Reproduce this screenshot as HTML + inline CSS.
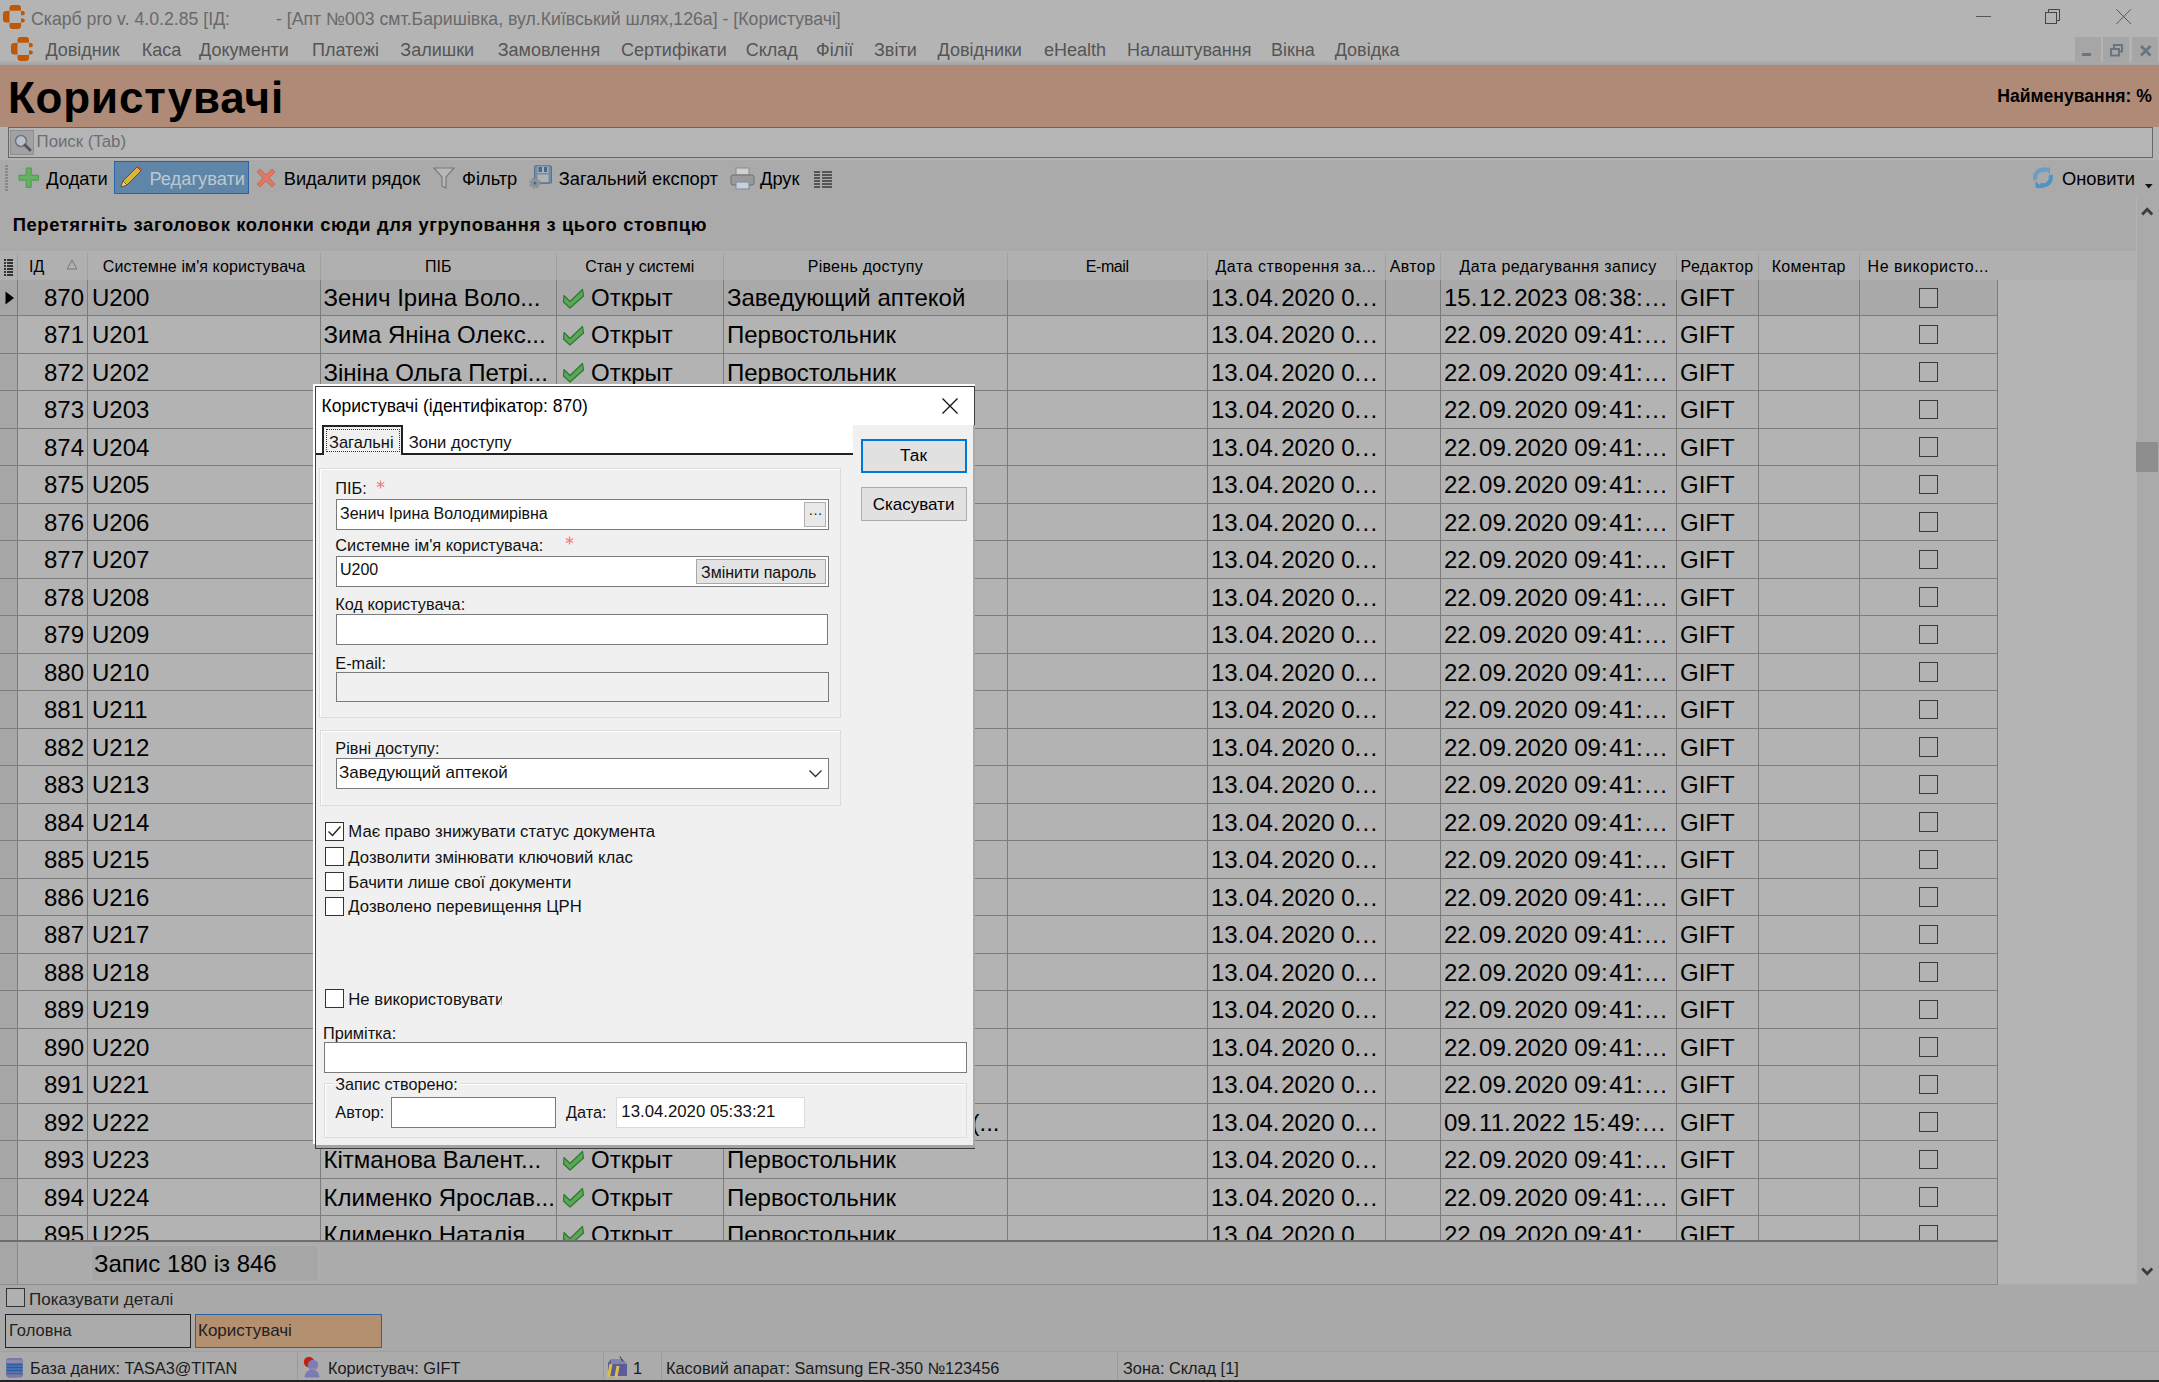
<!DOCTYPE html><html><head><meta charset="utf-8"><style>
*{box-sizing:border-box;margin:0;padding:0}
body{width:2159px;height:1382px;position:relative;overflow:hidden;background:#acacac;font-family:"Liberation Sans",sans-serif;color:#000}
.a{position:absolute}
.t{position:absolute;white-space:pre;line-height:1}
svg{position:absolute;overflow:visible}
</style></head><body>
<div class="a" style="left:0px;top:0px;width:2159px;height:33px;background:#b4b4b4"></div>
<svg style="left:3px;top:5px" width="23" height="25" viewBox="0 0 23 25"><g fill="#bc5808"><path d="M6.5 5.8V3a3 3 0 0 1 3-3h5.5a3 3 0 0 1 3 3v2.8z"/><path d="M6.5 6v11.4H3a3 3 0 0 1-3-3V9a3 3 0 0 1 3-3z"/><path d="M6.5 18h11.5v3a3 3 0 0 1-3 3H9.5a3 3 0 0 1-3-3z"/><path d="M18 6h1.8a2 2 0 0 1 2 2v0.3a2 2 0 0 1-2 2H18z"/><path d="M18 13.6h1.8a2 2 0 0 1 2 2v0a2 2 0 0 1-2 2H18z"/></g></svg>
<div class="t" style="left:31px;top:10.72px;font-size:17.7px;font-weight:400;color:#696969;">Скарб pro v. 4.0.2.85 [ІД:</div>
<div class="t" style="left:276px;top:10.72px;font-size:17.7px;font-weight:400;color:#696969;">- [Апт №003 смт.Баришівка, вул.Київський шлях,126а] - [Користувачі]</div>
<div class="a" style="left:1976px;top:16px;width:15px;height:1.2px;background:#555"></div>
<svg style="left:2044px;top:8px" width="18" height="18"><rect x="1.5" y="4.5" width="11" height="11" fill="none" stroke="#444" stroke-width="1"/><path d="M4.5 4.5v-3h11v11h-3" fill="none" stroke="#444" stroke-width="1"/></svg>
<svg style="left:2116px;top:9px" width="16" height="16"><path d="M0.3 0.3L15 15M15 0.3L0.3 15" stroke="#555" stroke-width="1"/></svg>
<div class="a" style="left:0px;top:33px;width:2159px;height:28px;background:#b4b4b4"></div>
<div class="a" style="left:0px;top:61px;width:2159px;height:4px;background:linear-gradient(#b0b0b0,#a4a4a4)"></div>
<svg style="left:11px;top:36.5px" width="23" height="25" viewBox="0 0 23 25"><g fill="#bc5808"><path d="M6.5 5.8V3a3 3 0 0 1 3-3h5.5a3 3 0 0 1 3 3v2.8z"/><path d="M6.5 6v11.4H3a3 3 0 0 1-3-3V9a3 3 0 0 1 3-3z"/><path d="M6.5 18h11.5v3a3 3 0 0 1-3 3H9.5a3 3 0 0 1-3-3z"/><path d="M18 6h1.8a2 2 0 0 1 2 2v0.3a2 2 0 0 1-2 2H18z"/><path d="M18 13.6h1.8a2 2 0 0 1 2 2v0a2 2 0 0 1-2 2H18z"/></g></svg>
<div class="t" style="left:45.4px;top:40.86px;font-size:18px;font-weight:400;color:#555;">Довідник</div>
<div class="t" style="left:141.7px;top:40.86px;font-size:18px;font-weight:400;color:#555;">Каса</div>
<div class="t" style="left:199px;top:40.86px;font-size:18px;font-weight:400;color:#555;">Документи</div>
<div class="t" style="left:312px;top:40.86px;font-size:18px;font-weight:400;color:#555;">Платежі</div>
<div class="t" style="left:400.3px;top:40.86px;font-size:18px;font-weight:400;color:#555;">Залишки</div>
<div class="t" style="left:497.7px;top:40.86px;font-size:18px;font-weight:400;color:#555;">Замовлення</div>
<div class="t" style="left:621px;top:40.86px;font-size:18px;font-weight:400;color:#555;">Сертифікати</div>
<div class="t" style="left:745.7px;top:40.86px;font-size:18px;font-weight:400;color:#555;">Склад</div>
<div class="t" style="left:816px;top:40.86px;font-size:18px;font-weight:400;color:#555;">Філії</div>
<div class="t" style="left:874px;top:40.86px;font-size:18px;font-weight:400;color:#555;">Звіти</div>
<div class="t" style="left:937.5px;top:40.86px;font-size:18px;font-weight:400;color:#555;">Довідники</div>
<div class="t" style="left:1044px;top:40.86px;font-size:18px;font-weight:400;color:#555;">eHealth</div>
<div class="t" style="left:1127px;top:40.86px;font-size:18px;font-weight:400;color:#555;">Налаштування</div>
<div class="t" style="left:1271px;top:40.86px;font-size:18px;font-weight:400;color:#555;">Вікна</div>
<div class="t" style="left:1334.7px;top:40.86px;font-size:18px;font-weight:400;color:#555;">Довідка</div>
<div class="a" style="left:2074.7px;top:37px;width:26.3px;height:26.2px;background:#a6a6a6"></div>
<div class="a" style="left:2103px;top:37px;width:26.3px;height:26.2px;background:#a6a6a6"></div>
<div class="a" style="left:2132px;top:37px;width:26.3px;height:26.2px;background:#a6a6a6"></div>
<div class="a" style="left:2082px;top:53.4px;width:9px;height:2.6px;background:#687684"></div>
<svg style="left:2110px;top:44px" width="14" height="13"><rect x="1" y="5" width="8" height="6.5" fill="none" stroke="#687684" stroke-width="2"/><path d="M4 4V1h8v6.5h-2.5" fill="none" stroke="#687684" stroke-width="2"/></svg>
<svg style="left:2140px;top:45px" width="12" height="12"><path d="M1 1L10.5 10.5M10.5 1L1 10.5" stroke="#687684" stroke-width="2.8"/></svg>
<div class="a" style="left:0px;top:65px;width:2159px;height:62px;background:#ae8a77"></div>
<div class="t" style="left:7.9px;top:75.75px;font-size:44px;font-weight:700;color:#000;letter-spacing:0.84px">Користувачі</div>
<div class="t" style="right:7px;top:87.80px;font-size:17.6px;font-weight:700;color:#000;">Найменування: %</div>
<div class="a" style="left:0px;top:127px;width:2159px;height:33px;background:#b3b3b3"></div>
<div class="a" style="left:8px;top:126.5px;width:2144.5px;height:31.7px;border:1.4px solid #666;background:#b5b5b5"></div>
<div class="a" style="left:10px;top:130px;width:24px;height:25px;background:#a2a2a2;border:1px solid #8e8e8e"></div>
<svg style="left:13px;top:133px" width="20" height="20"><circle cx="8" cy="8" r="5.5" fill="#b8c0cc" stroke="#6f7680" stroke-width="1.6"/><path d="M12 12l5 5" stroke="#555" stroke-width="3" stroke-linecap="round"/></svg>
<div class="t" style="left:36.6px;top:133.78px;font-size:16.8px;font-weight:400;color:#6a6e76;">Поиск (Tab)</div>
<div class="a" style="left:0px;top:160px;width:2159px;height:37px;background:#aaaaaa"></div>
<div class="a" style="left:5px;top:165px;width:3px;height:1.5px;background:#888"></div>
<div class="a" style="left:5px;top:168px;width:3px;height:1.5px;background:#888"></div>
<div class="a" style="left:5px;top:171px;width:3px;height:1.5px;background:#888"></div>
<div class="a" style="left:5px;top:174px;width:3px;height:1.5px;background:#888"></div>
<div class="a" style="left:5px;top:177px;width:3px;height:1.5px;background:#888"></div>
<div class="a" style="left:5px;top:180px;width:3px;height:1.5px;background:#888"></div>
<div class="a" style="left:5px;top:183px;width:3px;height:1.5px;background:#888"></div>
<div class="a" style="left:5px;top:186px;width:3px;height:1.5px;background:#888"></div>
<div class="a" style="left:5px;top:189px;width:3px;height:1.5px;background:#888"></div>
<svg style="left:18px;top:167px" width="22" height="22"><path d="M8.2 1h5v7.2h7.2v5h-7.2v7.2h-5v-7.2h-7.2v-5h7.2z" fill="#66b064" stroke="#4e9a4a" stroke-width="1"/></svg>
<div class="t" style="left:46.3px;top:169.81px;font-size:18.3px;font-weight:400;color:#000;">Додати</div>
<div class="a" style="left:114px;top:161px;width:135px;height:33px;background:#5f86a8;border:1px solid #2a62a2"></div>
<svg style="left:118px;top:164px" width="26" height="26"><path d="M3 23l2-6 14-14 4 4-14 14z" fill="#d8b43a" stroke="#6a5220" stroke-width="1"/><path d="M19 3l4 4 1.5-1.5-4-4z" fill="#c05050"/><path d="M3 23l2-6 4 4z" fill="#e8d0a0" stroke="#6a5220" stroke-width="0.8"/></svg>
<div class="t" style="left:149.4px;top:169.81px;font-size:18.3px;font-weight:400;color:#bdc8d0;">Редагувати</div>
<svg style="left:255px;top:167px" width="22" height="22"><path d="M2 5l3-3 6 6 6-6 3 3-6 6 6 6-3 3-6-6-6 6-3-3 6-6z" fill="#dc7a66" stroke="#c8604c" stroke-width="0.8"/></svg>
<div class="t" style="left:283.7px;top:169.81px;font-size:18.3px;font-weight:400;color:#000;">Видалити рядок</div>
<svg style="left:433px;top:166px" width="22" height="24"><path d="M1 2h20l-8 9v11l-4-2v-9z" fill="#b8b8b8" stroke="#7a7a7a" stroke-width="1.2"/></svg>
<div class="t" style="left:462px;top:169.81px;font-size:18.3px;font-weight:400;color:#000;">Фільтр</div>
<svg style="left:529px;top:165px" width="24" height="24"><rect x="5.5" y="0.8" width="17" height="17.5" rx="1" fill="#6f8ea8" stroke="#5a7088" stroke-width="1"/><rect x="8.5" y="1.5" width="11" height="6.5" fill="#a9b0b8"/><rect x="9.5" y="2" width="3.5" height="5" fill="#46688a"/><rect x="15" y="2" width="3" height="5" fill="#46688a"/><rect x="8.5" y="9.5" width="11" height="7.5" fill="#b2b2b2"/><circle cx="6" cy="18" r="4.6" fill="#8e9498" stroke="#8a9094" stroke-width="2.2" stroke-dasharray="2 1.6"/><circle cx="6" cy="18" r="1.6" fill="#4a6a88"/></svg>
<div class="t" style="left:558.7px;top:169.81px;font-size:18.3px;font-weight:400;color:#000;">Загальний експорт</div>
<svg style="left:730px;top:167px" width="25" height="24"><rect x="6" y="1" width="13" height="7" fill="#d0d0d0" stroke="#8a8a8a"/><rect x="1" y="8" width="23" height="10" rx="2" fill="#9a9a9a" stroke="#707070"/><rect x="6" y="15" width="13" height="7" fill="#c8d0dc" stroke="#7a8aa0"/></svg>
<div class="t" style="left:760px;top:169.81px;font-size:18.3px;font-weight:400;color:#000;">Друк</div>
<div class="a" style="left:814px;top:171px;width:6px;height:1.5px;background:#555"></div>
<div class="a" style="left:822px;top:171px;width:10px;height:1.5px;background:#555"></div>
<div class="a" style="left:814px;top:174px;width:6px;height:1.5px;background:#555"></div>
<div class="a" style="left:822px;top:174px;width:10px;height:1.5px;background:#555"></div>
<div class="a" style="left:814px;top:177px;width:6px;height:1.5px;background:#555"></div>
<div class="a" style="left:822px;top:177px;width:10px;height:1.5px;background:#555"></div>
<div class="a" style="left:814px;top:180px;width:6px;height:1.5px;background:#555"></div>
<div class="a" style="left:822px;top:180px;width:10px;height:1.5px;background:#555"></div>
<div class="a" style="left:814px;top:183px;width:6px;height:1.5px;background:#555"></div>
<div class="a" style="left:822px;top:183px;width:10px;height:1.5px;background:#555"></div>
<div class="a" style="left:814px;top:186px;width:6px;height:1.5px;background:#555"></div>
<div class="a" style="left:822px;top:186px;width:10px;height:1.5px;background:#555"></div>
<svg style="left:2032px;top:166.5px" width="22" height="22"><path d="M3.5 13A8 8 0 0 1 14 3.2" fill="none" stroke="#6a9ec6" stroke-width="4.2"/><path d="M11 0.5h7v7z" fill="#6a9ec6"/><path d="M18.5 8A8 8 0 0 1 8 17.8" fill="none" stroke="#4d94c4" stroke-width="4.2"/><path d="M11 21h-7.5v-7z" fill="#4d94c4"/></svg>
<div class="t" style="left:2062px;top:169.81px;font-size:18.3px;font-weight:400;color:#000;">Оновити</div>
<svg style="left:2145px;top:183.5px" width="9" height="6"><path d="M0 0h7.6l-3.8 4.6z" fill="#111"/></svg>
<div class="a" style="left:0px;top:197px;width:2136px;height:54px;background:#aaaaaa"></div>
<div class="t" style="left:12.7px;top:216.02px;font-size:18.4px;font-weight:700;color:#000;letter-spacing:0.6px">Перетягніть заголовок колонки сюди для угруповання з цього стовпцю</div>
<div class="a" style="left:1998px;top:251px;width:138px;height:1033px;background:#b4b4b4"></div>
<div class="a" style="left:2136px;top:197px;width:23px;height:1087px;background:#aaaaaa"></div>
<div class="a" style="left:2136px;top:197px;width:1px;height:1087px;background:#b2b2b2"></div>
<svg style="left:2141px;top:205px" width="13" height="11"><path d="M1.2 9.5L6.2 4.2L11.2 9.5" fill="none" stroke="#3c3c3c" stroke-width="2.8"/></svg>
<div class="a" style="left:2136px;top:441.7px;width:22px;height:30px;background:#8e8e8e"></div>
<svg style="left:2141px;top:1267px" width="13" height="11"><path d="M1.2 1.5L6.2 6.8L11.2 1.5" fill="none" stroke="#3c3c3c" stroke-width="2.8"/></svg>
<div class="a" style="left:0px;top:251px;width:2136px;height:29px;background:#b0b0b0"></div>
<div class="a" style="left:17.0px;top:253px;width:1px;height:27px;background:#a0a0a0"></div>
<div class="a" style="left:87.0px;top:253px;width:1px;height:27px;background:#a0a0a0"></div>
<div class="a" style="left:320.0px;top:253px;width:1px;height:27px;background:#a0a0a0"></div>
<div class="a" style="left:555.5px;top:253px;width:1px;height:27px;background:#a0a0a0"></div>
<div class="a" style="left:723.0px;top:253px;width:1px;height:27px;background:#a0a0a0"></div>
<div class="a" style="left:1006.8px;top:253px;width:1px;height:27px;background:#a0a0a0"></div>
<div class="a" style="left:1206.5px;top:253px;width:1px;height:27px;background:#a0a0a0"></div>
<div class="a" style="left:1384.5px;top:253px;width:1px;height:27px;background:#a0a0a0"></div>
<div class="a" style="left:1439.7px;top:253px;width:1px;height:27px;background:#a0a0a0"></div>
<div class="a" style="left:1675.5px;top:253px;width:1px;height:27px;background:#a0a0a0"></div>
<div class="a" style="left:1757.8px;top:253px;width:1px;height:27px;background:#a0a0a0"></div>
<div class="a" style="left:1858.7px;top:253px;width:1px;height:27px;background:#a0a0a0"></div>
<div class="t" style="left:29px;top:259.46px;font-size:16px;font-weight:400;color:#000;">ІД</div>
<svg style="left:66px;top:259px" width="12" height="12"><path d="M6 1L11 10H1z" fill="none" stroke="#777" stroke-width="1"/></svg>
<div class="t" style="left:82.5px;width:243.0px;text-align:center;top:259.46px;font-size:16px;font-weight:400;color:#000;letter-spacing:0.1px">Системне ім'я користувача</div>
<div class="t" style="left:315.5px;width:245.5px;text-align:center;top:259.46px;font-size:16px;font-weight:400;color:#000;letter-spacing:0px">ПІБ</div>
<div class="t" style="left:551.0px;width:177.5px;text-align:center;top:259.46px;font-size:16px;font-weight:400;color:#000;letter-spacing:0px">Стан у системі</div>
<div class="t" style="left:718.5px;width:293.79999999999995px;text-align:center;top:259.46px;font-size:16px;font-weight:400;color:#000;letter-spacing:0.28px">Рівень доступу</div>
<div class="t" style="left:1002.3000000000001px;width:209.70000000000005px;text-align:center;top:259.46px;font-size:16px;font-weight:400;color:#000;letter-spacing:-0.43px">E-mail</div>
<div class="t" style="left:1202.0px;width:188px;text-align:center;top:259.46px;font-size:16px;font-weight:400;color:#000;letter-spacing:0.52px">Дата створення за...</div>
<div class="t" style="left:1380.0px;width:65.20000000000005px;text-align:center;top:259.46px;font-size:16px;font-weight:400;color:#000;letter-spacing:0.4px">Автор</div>
<div class="t" style="left:1435.1999999999998px;width:245.79999999999995px;text-align:center;top:259.46px;font-size:16px;font-weight:400;color:#000;letter-spacing:0.44px">Дата редагування запису</div>
<div class="t" style="left:1671.0px;width:92.29999999999995px;text-align:center;top:259.46px;font-size:16px;font-weight:400;color:#000;letter-spacing:0.56px">Редактор</div>
<div class="t" style="left:1753.3px;width:110.90000000000009px;text-align:center;top:259.46px;font-size:16px;font-weight:400;color:#000;letter-spacing:0.26px">Коментар</div>
<div class="t" style="left:1854.1999999999998px;width:148.29999999999995px;text-align:center;top:259.46px;font-size:16px;font-weight:400;color:#000;letter-spacing:0.52px">Не використо...</div>
<div class="a" style="left:4px;top:259px;width:2px;height:1.5px;background:#333"></div>
<div class="a" style="left:7px;top:259px;width:6px;height:1.5px;background:#333"></div>
<div class="a" style="left:4px;top:262px;width:2px;height:1.5px;background:#333"></div>
<div class="a" style="left:7px;top:262px;width:6px;height:1.5px;background:#333"></div>
<div class="a" style="left:4px;top:265px;width:2px;height:1.5px;background:#333"></div>
<div class="a" style="left:7px;top:265px;width:6px;height:1.5px;background:#333"></div>
<div class="a" style="left:4px;top:268px;width:2px;height:1.5px;background:#333"></div>
<div class="a" style="left:7px;top:268px;width:6px;height:1.5px;background:#333"></div>
<div class="a" style="left:4px;top:271px;width:2px;height:1.5px;background:#333"></div>
<div class="a" style="left:7px;top:271px;width:6px;height:1.5px;background:#333"></div>
<div class="a" style="left:4px;top:274px;width:2px;height:1.5px;background:#333"></div>
<div class="a" style="left:7px;top:274px;width:6px;height:1.5px;background:#333"></div>
<div class="a" style="left:0;top:280px;width:1998px;height:961px;overflow:hidden">
<div class="a" style="left:17.5px;top:0px;width:1980px;height:36.0px;background:#a9a9a9"></div>
<div class="a" style="left:0;top:0px;width:17.5px;height:36.0px;background:#a6a6a6"></div>
<div class="a" style="left:0;top:35.0px;width:1998px;height:1.5px;background:#7c7c7c"></div>
<svg style="left:5px;top:11px" width="10" height="14"><path d="M0.5 0.5L9 7L0.5 13.5z" fill="#000"/></svg>
<div class="t" style="right:1914px;top:6.38px;font-size:24px">870</div>
<div class="t" style="left:92px;top:6.38px;font-size:24px">U200</div>
<div class="t" style="left:323.5px;top:6.38px;font-size:24px">Зенич Ірина Воло...</div>
<svg style="left:562px;top:8.0px" width="24" height="22"><path d="M2 7.5L8 13.5L20.5 1.5L21.5 8L8 20L1.5 14z" fill="#5aa65a" stroke="#2c7a2c" stroke-width="1.2" stroke-linejoin="round"/></svg>
<div class="t" style="left:591px;top:6.38px;font-size:24px">Открыт</div>
<div class="t" style="left:727px;top:6.38px;font-size:24px">Заведующий аптекой</div>
<div class="t" style="left:1211px;top:6.38px;font-size:24px">13<span style="letter-spacing:1.7px">.</span>04<span style="letter-spacing:1.7px">.</span>2020 0<span style="letter-spacing:1.3px">...</span></div>
<div class="t" style="left:1444px;top:6.38px;font-size:24px">15<span style="letter-spacing:1.7px">.</span>12<span style="letter-spacing:1.7px">.</span>2023 08<span style="letter-spacing:1.7px">:</span>38<span style="letter-spacing:1.7px">:</span><span style="letter-spacing:1.3px">...</span></div>
<div class="t" style="left:1680px;top:6.38px;font-size:24px">GIFT</div>
<div class="a" style="left:1918.5px;top:8.0px;width:19.5px;height:19.5px;border:1.6px solid #3a3a3a;background:#b3b3b3"></div>
<div class="a" style="left:17.5px;top:36.0px;width:1980px;height:37.5px;background:#b3b3b3"></div>
<div class="a" style="left:0;top:36.0px;width:17.5px;height:37.5px;background:#a6a6a6"></div>
<div class="a" style="left:0;top:72.5px;width:1998px;height:1.5px;background:#7c7c7c"></div>
<div class="t" style="right:1914px;top:43.13px;font-size:24px">871</div>
<div class="t" style="left:92px;top:43.13px;font-size:24px">U201</div>
<div class="t" style="left:323.5px;top:43.13px;font-size:24px">Зима Яніна Олекс...</div>
<svg style="left:562px;top:44.75px" width="24" height="22"><path d="M2 7.5L8 13.5L20.5 1.5L21.5 8L8 20L1.5 14z" fill="#5aa65a" stroke="#2c7a2c" stroke-width="1.2" stroke-linejoin="round"/></svg>
<div class="t" style="left:591px;top:43.13px;font-size:24px">Открыт</div>
<div class="t" style="left:727px;top:43.13px;font-size:24px">Первостольник</div>
<div class="t" style="left:1211px;top:43.13px;font-size:24px">13<span style="letter-spacing:1.7px">.</span>04<span style="letter-spacing:1.7px">.</span>2020 0<span style="letter-spacing:1.3px">...</span></div>
<div class="t" style="left:1444px;top:43.13px;font-size:24px">22<span style="letter-spacing:1.7px">.</span>09<span style="letter-spacing:1.7px">.</span>2020 09<span style="letter-spacing:1.7px">:</span>41<span style="letter-spacing:1.7px">:</span><span style="letter-spacing:1.3px">...</span></div>
<div class="t" style="left:1680px;top:43.13px;font-size:24px">GIFT</div>
<div class="a" style="left:1918.5px;top:44.75px;width:19.5px;height:19.5px;border:1.6px solid #3a3a3a;background:#b3b3b3"></div>
<div class="a" style="left:17.5px;top:73.5px;width:1980px;height:37.5px;background:#b3b3b3"></div>
<div class="a" style="left:0;top:73.5px;width:17.5px;height:37.5px;background:#a6a6a6"></div>
<div class="a" style="left:0;top:110.0px;width:1998px;height:1.5px;background:#7c7c7c"></div>
<div class="t" style="right:1914px;top:80.63px;font-size:24px">872</div>
<div class="t" style="left:92px;top:80.63px;font-size:24px">U202</div>
<div class="t" style="left:323.5px;top:80.63px;font-size:24px">Зініна Ольга Петрі...</div>
<svg style="left:562px;top:82.25px" width="24" height="22"><path d="M2 7.5L8 13.5L20.5 1.5L21.5 8L8 20L1.5 14z" fill="#5aa65a" stroke="#2c7a2c" stroke-width="1.2" stroke-linejoin="round"/></svg>
<div class="t" style="left:591px;top:80.63px;font-size:24px">Открыт</div>
<div class="t" style="left:727px;top:80.63px;font-size:24px">Первостольник</div>
<div class="t" style="left:1211px;top:80.63px;font-size:24px">13<span style="letter-spacing:1.7px">.</span>04<span style="letter-spacing:1.7px">.</span>2020 0<span style="letter-spacing:1.3px">...</span></div>
<div class="t" style="left:1444px;top:80.63px;font-size:24px">22<span style="letter-spacing:1.7px">.</span>09<span style="letter-spacing:1.7px">.</span>2020 09<span style="letter-spacing:1.7px">:</span>41<span style="letter-spacing:1.7px">:</span><span style="letter-spacing:1.3px">...</span></div>
<div class="t" style="left:1680px;top:80.63px;font-size:24px">GIFT</div>
<div class="a" style="left:1918.5px;top:82.25px;width:19.5px;height:19.5px;border:1.6px solid #3a3a3a;background:#b3b3b3"></div>
<div class="a" style="left:17.5px;top:111.0px;width:1980px;height:37.5px;background:#b3b3b3"></div>
<div class="a" style="left:0;top:111.0px;width:17.5px;height:37.5px;background:#a6a6a6"></div>
<div class="a" style="left:0;top:147.5px;width:1998px;height:1.5px;background:#7c7c7c"></div>
<div class="t" style="right:1914px;top:118.13px;font-size:24px">873</div>
<div class="t" style="left:92px;top:118.13px;font-size:24px">U203</div>
<div class="t" style="left:1211px;top:118.13px;font-size:24px">13<span style="letter-spacing:1.7px">.</span>04<span style="letter-spacing:1.7px">.</span>2020 0<span style="letter-spacing:1.3px">...</span></div>
<div class="t" style="left:1444px;top:118.13px;font-size:24px">22<span style="letter-spacing:1.7px">.</span>09<span style="letter-spacing:1.7px">.</span>2020 09<span style="letter-spacing:1.7px">:</span>41<span style="letter-spacing:1.7px">:</span><span style="letter-spacing:1.3px">...</span></div>
<div class="t" style="left:1680px;top:118.13px;font-size:24px">GIFT</div>
<div class="a" style="left:1918.5px;top:119.75px;width:19.5px;height:19.5px;border:1.6px solid #3a3a3a;background:#b3b3b3"></div>
<div class="a" style="left:17.5px;top:148.5px;width:1980px;height:37.5px;background:#b3b3b3"></div>
<div class="a" style="left:0;top:148.5px;width:17.5px;height:37.5px;background:#a6a6a6"></div>
<div class="a" style="left:0;top:185.0px;width:1998px;height:1.5px;background:#7c7c7c"></div>
<div class="t" style="right:1914px;top:155.63px;font-size:24px">874</div>
<div class="t" style="left:92px;top:155.63px;font-size:24px">U204</div>
<div class="t" style="left:1211px;top:155.63px;font-size:24px">13<span style="letter-spacing:1.7px">.</span>04<span style="letter-spacing:1.7px">.</span>2020 0<span style="letter-spacing:1.3px">...</span></div>
<div class="t" style="left:1444px;top:155.63px;font-size:24px">22<span style="letter-spacing:1.7px">.</span>09<span style="letter-spacing:1.7px">.</span>2020 09<span style="letter-spacing:1.7px">:</span>41<span style="letter-spacing:1.7px">:</span><span style="letter-spacing:1.3px">...</span></div>
<div class="t" style="left:1680px;top:155.63px;font-size:24px">GIFT</div>
<div class="a" style="left:1918.5px;top:157.25px;width:19.5px;height:19.5px;border:1.6px solid #3a3a3a;background:#b3b3b3"></div>
<div class="a" style="left:17.5px;top:186.0px;width:1980px;height:37.5px;background:#b3b3b3"></div>
<div class="a" style="left:0;top:186.0px;width:17.5px;height:37.5px;background:#a6a6a6"></div>
<div class="a" style="left:0;top:222.5px;width:1998px;height:1.5px;background:#7c7c7c"></div>
<div class="t" style="right:1914px;top:193.13px;font-size:24px">875</div>
<div class="t" style="left:92px;top:193.13px;font-size:24px">U205</div>
<div class="t" style="left:1211px;top:193.13px;font-size:24px">13<span style="letter-spacing:1.7px">.</span>04<span style="letter-spacing:1.7px">.</span>2020 0<span style="letter-spacing:1.3px">...</span></div>
<div class="t" style="left:1444px;top:193.13px;font-size:24px">22<span style="letter-spacing:1.7px">.</span>09<span style="letter-spacing:1.7px">.</span>2020 09<span style="letter-spacing:1.7px">:</span>41<span style="letter-spacing:1.7px">:</span><span style="letter-spacing:1.3px">...</span></div>
<div class="t" style="left:1680px;top:193.13px;font-size:24px">GIFT</div>
<div class="a" style="left:1918.5px;top:194.75px;width:19.5px;height:19.5px;border:1.6px solid #3a3a3a;background:#b3b3b3"></div>
<div class="a" style="left:17.5px;top:223.5px;width:1980px;height:37.5px;background:#b3b3b3"></div>
<div class="a" style="left:0;top:223.5px;width:17.5px;height:37.5px;background:#a6a6a6"></div>
<div class="a" style="left:0;top:260.0px;width:1998px;height:1.5px;background:#7c7c7c"></div>
<div class="t" style="right:1914px;top:230.63px;font-size:24px">876</div>
<div class="t" style="left:92px;top:230.63px;font-size:24px">U206</div>
<div class="t" style="left:1211px;top:230.63px;font-size:24px">13<span style="letter-spacing:1.7px">.</span>04<span style="letter-spacing:1.7px">.</span>2020 0<span style="letter-spacing:1.3px">...</span></div>
<div class="t" style="left:1444px;top:230.63px;font-size:24px">22<span style="letter-spacing:1.7px">.</span>09<span style="letter-spacing:1.7px">.</span>2020 09<span style="letter-spacing:1.7px">:</span>41<span style="letter-spacing:1.7px">:</span><span style="letter-spacing:1.3px">...</span></div>
<div class="t" style="left:1680px;top:230.63px;font-size:24px">GIFT</div>
<div class="a" style="left:1918.5px;top:232.25px;width:19.5px;height:19.5px;border:1.6px solid #3a3a3a;background:#b3b3b3"></div>
<div class="a" style="left:17.5px;top:261.0px;width:1980px;height:37.5px;background:#b3b3b3"></div>
<div class="a" style="left:0;top:261.0px;width:17.5px;height:37.5px;background:#a6a6a6"></div>
<div class="a" style="left:0;top:297.5px;width:1998px;height:1.5px;background:#7c7c7c"></div>
<div class="t" style="right:1914px;top:268.13px;font-size:24px">877</div>
<div class="t" style="left:92px;top:268.13px;font-size:24px">U207</div>
<div class="t" style="left:1211px;top:268.13px;font-size:24px">13<span style="letter-spacing:1.7px">.</span>04<span style="letter-spacing:1.7px">.</span>2020 0<span style="letter-spacing:1.3px">...</span></div>
<div class="t" style="left:1444px;top:268.13px;font-size:24px">22<span style="letter-spacing:1.7px">.</span>09<span style="letter-spacing:1.7px">.</span>2020 09<span style="letter-spacing:1.7px">:</span>41<span style="letter-spacing:1.7px">:</span><span style="letter-spacing:1.3px">...</span></div>
<div class="t" style="left:1680px;top:268.13px;font-size:24px">GIFT</div>
<div class="a" style="left:1918.5px;top:269.75px;width:19.5px;height:19.5px;border:1.6px solid #3a3a3a;background:#b3b3b3"></div>
<div class="a" style="left:17.5px;top:298.5px;width:1980px;height:37.5px;background:#b3b3b3"></div>
<div class="a" style="left:0;top:298.5px;width:17.5px;height:37.5px;background:#a6a6a6"></div>
<div class="a" style="left:0;top:335.0px;width:1998px;height:1.5px;background:#7c7c7c"></div>
<div class="t" style="right:1914px;top:305.63px;font-size:24px">878</div>
<div class="t" style="left:92px;top:305.63px;font-size:24px">U208</div>
<div class="t" style="left:1211px;top:305.63px;font-size:24px">13<span style="letter-spacing:1.7px">.</span>04<span style="letter-spacing:1.7px">.</span>2020 0<span style="letter-spacing:1.3px">...</span></div>
<div class="t" style="left:1444px;top:305.63px;font-size:24px">22<span style="letter-spacing:1.7px">.</span>09<span style="letter-spacing:1.7px">.</span>2020 09<span style="letter-spacing:1.7px">:</span>41<span style="letter-spacing:1.7px">:</span><span style="letter-spacing:1.3px">...</span></div>
<div class="t" style="left:1680px;top:305.63px;font-size:24px">GIFT</div>
<div class="a" style="left:1918.5px;top:307.25px;width:19.5px;height:19.5px;border:1.6px solid #3a3a3a;background:#b3b3b3"></div>
<div class="a" style="left:17.5px;top:336.0px;width:1980px;height:37.5px;background:#b3b3b3"></div>
<div class="a" style="left:0;top:336.0px;width:17.5px;height:37.5px;background:#a6a6a6"></div>
<div class="a" style="left:0;top:372.5px;width:1998px;height:1.5px;background:#7c7c7c"></div>
<div class="t" style="right:1914px;top:343.13px;font-size:24px">879</div>
<div class="t" style="left:92px;top:343.13px;font-size:24px">U209</div>
<div class="t" style="left:1211px;top:343.13px;font-size:24px">13<span style="letter-spacing:1.7px">.</span>04<span style="letter-spacing:1.7px">.</span>2020 0<span style="letter-spacing:1.3px">...</span></div>
<div class="t" style="left:1444px;top:343.13px;font-size:24px">22<span style="letter-spacing:1.7px">.</span>09<span style="letter-spacing:1.7px">.</span>2020 09<span style="letter-spacing:1.7px">:</span>41<span style="letter-spacing:1.7px">:</span><span style="letter-spacing:1.3px">...</span></div>
<div class="t" style="left:1680px;top:343.13px;font-size:24px">GIFT</div>
<div class="a" style="left:1918.5px;top:344.75px;width:19.5px;height:19.5px;border:1.6px solid #3a3a3a;background:#b3b3b3"></div>
<div class="a" style="left:17.5px;top:373.5px;width:1980px;height:37.5px;background:#b3b3b3"></div>
<div class="a" style="left:0;top:373.5px;width:17.5px;height:37.5px;background:#a6a6a6"></div>
<div class="a" style="left:0;top:410.0px;width:1998px;height:1.5px;background:#7c7c7c"></div>
<div class="t" style="right:1914px;top:380.63px;font-size:24px">880</div>
<div class="t" style="left:92px;top:380.63px;font-size:24px">U210</div>
<div class="t" style="left:1211px;top:380.63px;font-size:24px">13<span style="letter-spacing:1.7px">.</span>04<span style="letter-spacing:1.7px">.</span>2020 0<span style="letter-spacing:1.3px">...</span></div>
<div class="t" style="left:1444px;top:380.63px;font-size:24px">22<span style="letter-spacing:1.7px">.</span>09<span style="letter-spacing:1.7px">.</span>2020 09<span style="letter-spacing:1.7px">:</span>41<span style="letter-spacing:1.7px">:</span><span style="letter-spacing:1.3px">...</span></div>
<div class="t" style="left:1680px;top:380.63px;font-size:24px">GIFT</div>
<div class="a" style="left:1918.5px;top:382.25px;width:19.5px;height:19.5px;border:1.6px solid #3a3a3a;background:#b3b3b3"></div>
<div class="a" style="left:17.5px;top:411.0px;width:1980px;height:37.5px;background:#b3b3b3"></div>
<div class="a" style="left:0;top:411.0px;width:17.5px;height:37.5px;background:#a6a6a6"></div>
<div class="a" style="left:0;top:447.5px;width:1998px;height:1.5px;background:#7c7c7c"></div>
<div class="t" style="right:1914px;top:418.13px;font-size:24px">881</div>
<div class="t" style="left:92px;top:418.13px;font-size:24px">U211</div>
<div class="t" style="left:1211px;top:418.13px;font-size:24px">13<span style="letter-spacing:1.7px">.</span>04<span style="letter-spacing:1.7px">.</span>2020 0<span style="letter-spacing:1.3px">...</span></div>
<div class="t" style="left:1444px;top:418.13px;font-size:24px">22<span style="letter-spacing:1.7px">.</span>09<span style="letter-spacing:1.7px">.</span>2020 09<span style="letter-spacing:1.7px">:</span>41<span style="letter-spacing:1.7px">:</span><span style="letter-spacing:1.3px">...</span></div>
<div class="t" style="left:1680px;top:418.13px;font-size:24px">GIFT</div>
<div class="a" style="left:1918.5px;top:419.75px;width:19.5px;height:19.5px;border:1.6px solid #3a3a3a;background:#b3b3b3"></div>
<div class="a" style="left:17.5px;top:448.5px;width:1980px;height:37.5px;background:#b3b3b3"></div>
<div class="a" style="left:0;top:448.5px;width:17.5px;height:37.5px;background:#a6a6a6"></div>
<div class="a" style="left:0;top:485.0px;width:1998px;height:1.5px;background:#7c7c7c"></div>
<div class="t" style="right:1914px;top:455.63px;font-size:24px">882</div>
<div class="t" style="left:92px;top:455.63px;font-size:24px">U212</div>
<div class="t" style="left:1211px;top:455.63px;font-size:24px">13<span style="letter-spacing:1.7px">.</span>04<span style="letter-spacing:1.7px">.</span>2020 0<span style="letter-spacing:1.3px">...</span></div>
<div class="t" style="left:1444px;top:455.63px;font-size:24px">22<span style="letter-spacing:1.7px">.</span>09<span style="letter-spacing:1.7px">.</span>2020 09<span style="letter-spacing:1.7px">:</span>41<span style="letter-spacing:1.7px">:</span><span style="letter-spacing:1.3px">...</span></div>
<div class="t" style="left:1680px;top:455.63px;font-size:24px">GIFT</div>
<div class="a" style="left:1918.5px;top:457.25px;width:19.5px;height:19.5px;border:1.6px solid #3a3a3a;background:#b3b3b3"></div>
<div class="a" style="left:17.5px;top:486.0px;width:1980px;height:37.5px;background:#b3b3b3"></div>
<div class="a" style="left:0;top:486.0px;width:17.5px;height:37.5px;background:#a6a6a6"></div>
<div class="a" style="left:0;top:522.5px;width:1998px;height:1.5px;background:#7c7c7c"></div>
<div class="t" style="right:1914px;top:493.13px;font-size:24px">883</div>
<div class="t" style="left:92px;top:493.13px;font-size:24px">U213</div>
<div class="t" style="left:1211px;top:493.13px;font-size:24px">13<span style="letter-spacing:1.7px">.</span>04<span style="letter-spacing:1.7px">.</span>2020 0<span style="letter-spacing:1.3px">...</span></div>
<div class="t" style="left:1444px;top:493.13px;font-size:24px">22<span style="letter-spacing:1.7px">.</span>09<span style="letter-spacing:1.7px">.</span>2020 09<span style="letter-spacing:1.7px">:</span>41<span style="letter-spacing:1.7px">:</span><span style="letter-spacing:1.3px">...</span></div>
<div class="t" style="left:1680px;top:493.13px;font-size:24px">GIFT</div>
<div class="a" style="left:1918.5px;top:494.75px;width:19.5px;height:19.5px;border:1.6px solid #3a3a3a;background:#b3b3b3"></div>
<div class="a" style="left:17.5px;top:523.5px;width:1980px;height:37.5px;background:#b3b3b3"></div>
<div class="a" style="left:0;top:523.5px;width:17.5px;height:37.5px;background:#a6a6a6"></div>
<div class="a" style="left:0;top:560.0px;width:1998px;height:1.5px;background:#7c7c7c"></div>
<div class="t" style="right:1914px;top:530.63px;font-size:24px">884</div>
<div class="t" style="left:92px;top:530.63px;font-size:24px">U214</div>
<div class="t" style="left:1211px;top:530.63px;font-size:24px">13<span style="letter-spacing:1.7px">.</span>04<span style="letter-spacing:1.7px">.</span>2020 0<span style="letter-spacing:1.3px">...</span></div>
<div class="t" style="left:1444px;top:530.63px;font-size:24px">22<span style="letter-spacing:1.7px">.</span>09<span style="letter-spacing:1.7px">.</span>2020 09<span style="letter-spacing:1.7px">:</span>41<span style="letter-spacing:1.7px">:</span><span style="letter-spacing:1.3px">...</span></div>
<div class="t" style="left:1680px;top:530.63px;font-size:24px">GIFT</div>
<div class="a" style="left:1918.5px;top:532.25px;width:19.5px;height:19.5px;border:1.6px solid #3a3a3a;background:#b3b3b3"></div>
<div class="a" style="left:17.5px;top:561.0px;width:1980px;height:37.5px;background:#b3b3b3"></div>
<div class="a" style="left:0;top:561.0px;width:17.5px;height:37.5px;background:#a6a6a6"></div>
<div class="a" style="left:0;top:597.5px;width:1998px;height:1.5px;background:#7c7c7c"></div>
<div class="t" style="right:1914px;top:568.13px;font-size:24px">885</div>
<div class="t" style="left:92px;top:568.13px;font-size:24px">U215</div>
<div class="t" style="left:1211px;top:568.13px;font-size:24px">13<span style="letter-spacing:1.7px">.</span>04<span style="letter-spacing:1.7px">.</span>2020 0<span style="letter-spacing:1.3px">...</span></div>
<div class="t" style="left:1444px;top:568.13px;font-size:24px">22<span style="letter-spacing:1.7px">.</span>09<span style="letter-spacing:1.7px">.</span>2020 09<span style="letter-spacing:1.7px">:</span>41<span style="letter-spacing:1.7px">:</span><span style="letter-spacing:1.3px">...</span></div>
<div class="t" style="left:1680px;top:568.13px;font-size:24px">GIFT</div>
<div class="a" style="left:1918.5px;top:569.75px;width:19.5px;height:19.5px;border:1.6px solid #3a3a3a;background:#b3b3b3"></div>
<div class="a" style="left:17.5px;top:598.5px;width:1980px;height:37.5px;background:#b3b3b3"></div>
<div class="a" style="left:0;top:598.5px;width:17.5px;height:37.5px;background:#a6a6a6"></div>
<div class="a" style="left:0;top:635.0px;width:1998px;height:1.5px;background:#7c7c7c"></div>
<div class="t" style="right:1914px;top:605.63px;font-size:24px">886</div>
<div class="t" style="left:92px;top:605.63px;font-size:24px">U216</div>
<div class="t" style="left:1211px;top:605.63px;font-size:24px">13<span style="letter-spacing:1.7px">.</span>04<span style="letter-spacing:1.7px">.</span>2020 0<span style="letter-spacing:1.3px">...</span></div>
<div class="t" style="left:1444px;top:605.63px;font-size:24px">22<span style="letter-spacing:1.7px">.</span>09<span style="letter-spacing:1.7px">.</span>2020 09<span style="letter-spacing:1.7px">:</span>41<span style="letter-spacing:1.7px">:</span><span style="letter-spacing:1.3px">...</span></div>
<div class="t" style="left:1680px;top:605.63px;font-size:24px">GIFT</div>
<div class="a" style="left:1918.5px;top:607.25px;width:19.5px;height:19.5px;border:1.6px solid #3a3a3a;background:#b3b3b3"></div>
<div class="a" style="left:17.5px;top:636.0px;width:1980px;height:37.5px;background:#b3b3b3"></div>
<div class="a" style="left:0;top:636.0px;width:17.5px;height:37.5px;background:#a6a6a6"></div>
<div class="a" style="left:0;top:672.5px;width:1998px;height:1.5px;background:#7c7c7c"></div>
<div class="t" style="right:1914px;top:643.13px;font-size:24px">887</div>
<div class="t" style="left:92px;top:643.13px;font-size:24px">U217</div>
<div class="t" style="left:1211px;top:643.13px;font-size:24px">13<span style="letter-spacing:1.7px">.</span>04<span style="letter-spacing:1.7px">.</span>2020 0<span style="letter-spacing:1.3px">...</span></div>
<div class="t" style="left:1444px;top:643.13px;font-size:24px">22<span style="letter-spacing:1.7px">.</span>09<span style="letter-spacing:1.7px">.</span>2020 09<span style="letter-spacing:1.7px">:</span>41<span style="letter-spacing:1.7px">:</span><span style="letter-spacing:1.3px">...</span></div>
<div class="t" style="left:1680px;top:643.13px;font-size:24px">GIFT</div>
<div class="a" style="left:1918.5px;top:644.75px;width:19.5px;height:19.5px;border:1.6px solid #3a3a3a;background:#b3b3b3"></div>
<div class="a" style="left:17.5px;top:673.5px;width:1980px;height:37.5px;background:#b3b3b3"></div>
<div class="a" style="left:0;top:673.5px;width:17.5px;height:37.5px;background:#a6a6a6"></div>
<div class="a" style="left:0;top:710.0px;width:1998px;height:1.5px;background:#7c7c7c"></div>
<div class="t" style="right:1914px;top:680.63px;font-size:24px">888</div>
<div class="t" style="left:92px;top:680.63px;font-size:24px">U218</div>
<div class="t" style="left:1211px;top:680.63px;font-size:24px">13<span style="letter-spacing:1.7px">.</span>04<span style="letter-spacing:1.7px">.</span>2020 0<span style="letter-spacing:1.3px">...</span></div>
<div class="t" style="left:1444px;top:680.63px;font-size:24px">22<span style="letter-spacing:1.7px">.</span>09<span style="letter-spacing:1.7px">.</span>2020 09<span style="letter-spacing:1.7px">:</span>41<span style="letter-spacing:1.7px">:</span><span style="letter-spacing:1.3px">...</span></div>
<div class="t" style="left:1680px;top:680.63px;font-size:24px">GIFT</div>
<div class="a" style="left:1918.5px;top:682.25px;width:19.5px;height:19.5px;border:1.6px solid #3a3a3a;background:#b3b3b3"></div>
<div class="a" style="left:17.5px;top:711.0px;width:1980px;height:37.5px;background:#b3b3b3"></div>
<div class="a" style="left:0;top:711.0px;width:17.5px;height:37.5px;background:#a6a6a6"></div>
<div class="a" style="left:0;top:747.5px;width:1998px;height:1.5px;background:#7c7c7c"></div>
<div class="t" style="right:1914px;top:718.13px;font-size:24px">889</div>
<div class="t" style="left:92px;top:718.13px;font-size:24px">U219</div>
<div class="t" style="left:1211px;top:718.13px;font-size:24px">13<span style="letter-spacing:1.7px">.</span>04<span style="letter-spacing:1.7px">.</span>2020 0<span style="letter-spacing:1.3px">...</span></div>
<div class="t" style="left:1444px;top:718.13px;font-size:24px">22<span style="letter-spacing:1.7px">.</span>09<span style="letter-spacing:1.7px">.</span>2020 09<span style="letter-spacing:1.7px">:</span>41<span style="letter-spacing:1.7px">:</span><span style="letter-spacing:1.3px">...</span></div>
<div class="t" style="left:1680px;top:718.13px;font-size:24px">GIFT</div>
<div class="a" style="left:1918.5px;top:719.75px;width:19.5px;height:19.5px;border:1.6px solid #3a3a3a;background:#b3b3b3"></div>
<div class="a" style="left:17.5px;top:748.5px;width:1980px;height:37.5px;background:#b3b3b3"></div>
<div class="a" style="left:0;top:748.5px;width:17.5px;height:37.5px;background:#a6a6a6"></div>
<div class="a" style="left:0;top:785.0px;width:1998px;height:1.5px;background:#7c7c7c"></div>
<div class="t" style="right:1914px;top:755.63px;font-size:24px">890</div>
<div class="t" style="left:92px;top:755.63px;font-size:24px">U220</div>
<div class="t" style="left:1211px;top:755.63px;font-size:24px">13<span style="letter-spacing:1.7px">.</span>04<span style="letter-spacing:1.7px">.</span>2020 0<span style="letter-spacing:1.3px">...</span></div>
<div class="t" style="left:1444px;top:755.63px;font-size:24px">22<span style="letter-spacing:1.7px">.</span>09<span style="letter-spacing:1.7px">.</span>2020 09<span style="letter-spacing:1.7px">:</span>41<span style="letter-spacing:1.7px">:</span><span style="letter-spacing:1.3px">...</span></div>
<div class="t" style="left:1680px;top:755.63px;font-size:24px">GIFT</div>
<div class="a" style="left:1918.5px;top:757.25px;width:19.5px;height:19.5px;border:1.6px solid #3a3a3a;background:#b3b3b3"></div>
<div class="a" style="left:17.5px;top:786.0px;width:1980px;height:37.5px;background:#b3b3b3"></div>
<div class="a" style="left:0;top:786.0px;width:17.5px;height:37.5px;background:#a6a6a6"></div>
<div class="a" style="left:0;top:822.5px;width:1998px;height:1.5px;background:#7c7c7c"></div>
<div class="t" style="right:1914px;top:793.13px;font-size:24px">891</div>
<div class="t" style="left:92px;top:793.13px;font-size:24px">U221</div>
<div class="t" style="left:1211px;top:793.13px;font-size:24px">13<span style="letter-spacing:1.7px">.</span>04<span style="letter-spacing:1.7px">.</span>2020 0<span style="letter-spacing:1.3px">...</span></div>
<div class="t" style="left:1444px;top:793.13px;font-size:24px">22<span style="letter-spacing:1.7px">.</span>09<span style="letter-spacing:1.7px">.</span>2020 09<span style="letter-spacing:1.7px">:</span>41<span style="letter-spacing:1.7px">:</span><span style="letter-spacing:1.3px">...</span></div>
<div class="t" style="left:1680px;top:793.13px;font-size:24px">GIFT</div>
<div class="a" style="left:1918.5px;top:794.75px;width:19.5px;height:19.5px;border:1.6px solid #3a3a3a;background:#b3b3b3"></div>
<div class="a" style="left:17.5px;top:823.5px;width:1980px;height:37.5px;background:#b3b3b3"></div>
<div class="a" style="left:0;top:823.5px;width:17.5px;height:37.5px;background:#a6a6a6"></div>
<div class="a" style="left:0;top:860.0px;width:1998px;height:1.5px;background:#7c7c7c"></div>
<div class="t" style="right:1914px;top:830.63px;font-size:24px">892</div>
<div class="t" style="left:92px;top:830.63px;font-size:24px">U222</div>
<div class="t" style="left:1211px;top:830.63px;font-size:24px">13<span style="letter-spacing:1.7px">.</span>04<span style="letter-spacing:1.7px">.</span>2020 0<span style="letter-spacing:1.3px">...</span></div>
<div class="t" style="left:1444px;top:830.63px;font-size:24px">09<span style="letter-spacing:1.7px">.</span>11<span style="letter-spacing:1.7px">.</span>2022 15<span style="letter-spacing:1.7px">:</span>49<span style="letter-spacing:1.7px">:</span><span style="letter-spacing:1.3px">...</span></div>
<div class="t" style="left:1680px;top:830.63px;font-size:24px">GIFT</div>
<div class="a" style="left:1918.5px;top:832.25px;width:19.5px;height:19.5px;border:1.6px solid #3a3a3a;background:#b3b3b3"></div>
<div class="t" style="left:971.5px;top:830.63px;font-size:24px">(...</div>
<div class="a" style="left:17.5px;top:861.0px;width:1980px;height:37.5px;background:#b3b3b3"></div>
<div class="a" style="left:0;top:861.0px;width:17.5px;height:37.5px;background:#a6a6a6"></div>
<div class="a" style="left:0;top:897.5px;width:1998px;height:1.5px;background:#7c7c7c"></div>
<div class="t" style="right:1914px;top:868.13px;font-size:24px">893</div>
<div class="t" style="left:92px;top:868.13px;font-size:24px">U223</div>
<div class="t" style="left:323.5px;top:868.13px;font-size:24px">Кітманова Валент...</div>
<svg style="left:562px;top:869.75px" width="24" height="22"><path d="M2 7.5L8 13.5L20.5 1.5L21.5 8L8 20L1.5 14z" fill="#5aa65a" stroke="#2c7a2c" stroke-width="1.2" stroke-linejoin="round"/></svg>
<div class="t" style="left:591px;top:868.13px;font-size:24px">Открыт</div>
<div class="t" style="left:727px;top:868.13px;font-size:24px">Первостольник</div>
<div class="t" style="left:1211px;top:868.13px;font-size:24px">13<span style="letter-spacing:1.7px">.</span>04<span style="letter-spacing:1.7px">.</span>2020 0<span style="letter-spacing:1.3px">...</span></div>
<div class="t" style="left:1444px;top:868.13px;font-size:24px">22<span style="letter-spacing:1.7px">.</span>09<span style="letter-spacing:1.7px">.</span>2020 09<span style="letter-spacing:1.7px">:</span>41<span style="letter-spacing:1.7px">:</span><span style="letter-spacing:1.3px">...</span></div>
<div class="t" style="left:1680px;top:868.13px;font-size:24px">GIFT</div>
<div class="a" style="left:1918.5px;top:869.75px;width:19.5px;height:19.5px;border:1.6px solid #3a3a3a;background:#b3b3b3"></div>
<div class="a" style="left:17.5px;top:898.5px;width:1980px;height:37.5px;background:#b3b3b3"></div>
<div class="a" style="left:0;top:898.5px;width:17.5px;height:37.5px;background:#a6a6a6"></div>
<div class="a" style="left:0;top:935.0px;width:1998px;height:1.5px;background:#7c7c7c"></div>
<div class="t" style="right:1914px;top:905.63px;font-size:24px">894</div>
<div class="t" style="left:92px;top:905.63px;font-size:24px">U224</div>
<div class="t" style="left:323.5px;top:905.63px;font-size:24px">Клименко Ярослав...</div>
<svg style="left:562px;top:907.25px" width="24" height="22"><path d="M2 7.5L8 13.5L20.5 1.5L21.5 8L8 20L1.5 14z" fill="#5aa65a" stroke="#2c7a2c" stroke-width="1.2" stroke-linejoin="round"/></svg>
<div class="t" style="left:591px;top:905.63px;font-size:24px">Открыт</div>
<div class="t" style="left:727px;top:905.63px;font-size:24px">Первостольник</div>
<div class="t" style="left:1211px;top:905.63px;font-size:24px">13<span style="letter-spacing:1.7px">.</span>04<span style="letter-spacing:1.7px">.</span>2020 0<span style="letter-spacing:1.3px">...</span></div>
<div class="t" style="left:1444px;top:905.63px;font-size:24px">22<span style="letter-spacing:1.7px">.</span>09<span style="letter-spacing:1.7px">.</span>2020 09<span style="letter-spacing:1.7px">:</span>41<span style="letter-spacing:1.7px">:</span><span style="letter-spacing:1.3px">...</span></div>
<div class="t" style="left:1680px;top:905.63px;font-size:24px">GIFT</div>
<div class="a" style="left:1918.5px;top:907.25px;width:19.5px;height:19.5px;border:1.6px solid #3a3a3a;background:#b3b3b3"></div>
<div class="a" style="left:17.5px;top:936.0px;width:1980px;height:37.5px;background:#b3b3b3"></div>
<div class="a" style="left:0;top:936.0px;width:17.5px;height:37.5px;background:#a6a6a6"></div>
<div class="a" style="left:0;top:972.5px;width:1998px;height:1.5px;background:#7c7c7c"></div>
<div class="t" style="right:1914px;top:943.13px;font-size:24px">895</div>
<div class="t" style="left:92px;top:943.13px;font-size:24px">U225</div>
<div class="t" style="left:323.5px;top:943.13px;font-size:24px">Клименко Наталія</div>
<svg style="left:562px;top:944.75px" width="24" height="22"><path d="M2 7.5L8 13.5L20.5 1.5L21.5 8L8 20L1.5 14z" fill="#5aa65a" stroke="#2c7a2c" stroke-width="1.2" stroke-linejoin="round"/></svg>
<div class="t" style="left:591px;top:943.13px;font-size:24px">Открыт</div>
<div class="t" style="left:727px;top:943.13px;font-size:24px">Первостольник</div>
<div class="t" style="left:1211px;top:943.13px;font-size:24px">13<span style="letter-spacing:1.7px">.</span>04<span style="letter-spacing:1.7px">.</span>2020 0<span style="letter-spacing:1.3px">...</span></div>
<div class="t" style="left:1444px;top:943.13px;font-size:24px">22<span style="letter-spacing:1.7px">.</span>09<span style="letter-spacing:1.7px">.</span>2020 09<span style="letter-spacing:1.7px">:</span>41<span style="letter-spacing:1.7px">:</span><span style="letter-spacing:1.3px">...</span></div>
<div class="t" style="left:1680px;top:943.13px;font-size:24px">GIFT</div>
<div class="a" style="left:1918.5px;top:944.75px;width:19.5px;height:19.5px;border:1.6px solid #3a3a3a;background:#b3b3b3"></div>
<div class="a" style="left:17.0px;top:0;width:1.3px;height:961px;background:#7c7c7c"></div>
<div class="a" style="left:87.0px;top:0;width:1.3px;height:961px;background:#7c7c7c"></div>
<div class="a" style="left:320.0px;top:0;width:1.3px;height:961px;background:#7c7c7c"></div>
<div class="a" style="left:555.5px;top:0;width:1.3px;height:961px;background:#7c7c7c"></div>
<div class="a" style="left:723.0px;top:0;width:1.3px;height:961px;background:#7c7c7c"></div>
<div class="a" style="left:1006.8px;top:0;width:1.3px;height:961px;background:#7c7c7c"></div>
<div class="a" style="left:1206.5px;top:0;width:1.3px;height:961px;background:#7c7c7c"></div>
<div class="a" style="left:1384.5px;top:0;width:1.3px;height:961px;background:#7c7c7c"></div>
<div class="a" style="left:1439.7px;top:0;width:1.3px;height:961px;background:#7c7c7c"></div>
<div class="a" style="left:1675.5px;top:0;width:1.3px;height:961px;background:#7c7c7c"></div>
<div class="a" style="left:1757.8px;top:0;width:1.3px;height:961px;background:#7c7c7c"></div>
<div class="a" style="left:1858.7px;top:0;width:1.3px;height:961px;background:#7c7c7c"></div>
<div class="a" style="left:1997.0px;top:0;width:1.3px;height:961px;background:#7c7c7c"></div>
</div>
<div class="a" style="left:0px;top:1240px;width:1998px;height:2px;background:#6e6e6e"></div>
<div class="a" style="left:0px;top:1242px;width:1998px;height:42px;background:#ababab"></div>
<div class="a" style="left:0px;top:1242px;width:17.5px;height:42px;background:#a6a6a6"></div>
<div class="a" style="left:17px;top:1242px;width:1px;height:42px;background:#8a8a8a"></div>
<div class="a" style="left:90.5px;top:1245px;width:228px;height:36.5px;background:#a6a6a6;border:1px solid #b0b0b0"></div>
<div class="t" style="left:94px;top:1252.28px;font-size:24px;font-weight:400;color:#000;">Запис 180 із 846</div>
<div class="a" style="left:0px;top:1283.5px;width:1998px;height:1.2px;background:#8c8c8c"></div>
<div class="a" style="left:0px;top:1285px;width:2159px;height:66px;background:#a9a9a9"></div>
<div class="a" style="left:1997px;top:1242px;width:1.3px;height:42px;background:#8a8a8a"></div>
<div class="a" style="left:6px;top:1288px;width:19px;height:19px;border:1.5px solid #333;background:#b0b0b0"></div>
<div class="t" style="left:29px;top:1290.61px;font-size:17px;font-weight:400;color:#222;">Показувати деталі</div>
<div class="a" style="left:5px;top:1314px;width:186px;height:34px;border:1.5px solid #222;background:#ababab"></div>
<div class="t" style="left:9px;top:1322.03px;font-size:16.5px;font-weight:400;color:#222;">Головна</div>
<div class="a" style="left:195px;top:1314px;width:187px;height:34px;border:1.5px solid #2a62a2;background:#b3906f"></div>
<div class="t" style="left:198px;top:1321.61px;font-size:17px;font-weight:400;color:#222;">Користувачі</div>
<div class="a" style="left:0px;top:1351px;width:2159px;height:31px;background:#ababab"></div>
<div class="a" style="left:0px;top:1351px;width:2159px;height:1px;background:#a0a0a0"></div>
<div class="a" style="left:0px;top:1380px;width:2159px;height:2px;background:#222"></div>
<svg style="left:4.5px;top:1357px" width="19" height="22"><path d="M1 2.5L3 1h13.5l1.5 2v16l-2 1.5-12 0.5-3-2z" fill="#7a78a8"/><rect x="1.5" y="3" width="16" height="4" fill="#8c8aa8"/><path d="M1.5 7.5h16M1.5 10.5h16M1.5 13.5h16" stroke="#1f62aa" stroke-width="2.2"/><path d="M1.5 16.5h16" stroke="#3a64a0" stroke-width="1.5"/></svg>
<div class="t" style="left:30px;top:1360.20px;font-size:16.3px;font-weight:400;color:#1a1a1a;">База даних: TASA3@TITAN</div>
<div class="a" style="left:297px;top:1353px;width:1px;height:27px;background:#999"></div>
<svg style="left:303px;top:1356px" width="18" height="23"><circle cx="6" cy="6" r="5.2" fill="#c2200e"/><circle cx="10" cy="9" r="5.2" fill="#7c7cb8"/><path d="M7.5 12.5h5l-2.5 2.5z" fill="#d88a40"/><path d="M1.5 21.5a7.5 8 0 0 1 15 0z" fill="#7a7ab8"/></svg>
<div class="t" style="left:328px;top:1360.20px;font-size:16.3px;font-weight:400;color:#1a1a1a;">Користувач: GIFT</div>
<div class="a" style="left:603px;top:1353px;width:1px;height:27px;background:#999"></div>
<svg style="left:607px;top:1355.5px" width="21" height="23"><path d="M1 20V7l3-4h11l5 5v12z" fill="#5c5c9c"/><path d="M4 3h11l5 5H4z" fill="#8484b0"/><path d="M4 8l-2.5 13M11 10l-2 11" stroke="#e0c040" stroke-width="3"/><path d="M13 0.5l3 5" stroke="#333" stroke-width="1"/></svg>
<div class="t" style="left:633px;top:1360.20px;font-size:16.3px;font-weight:400;color:#1a1a1a;">1</div>
<div class="a" style="left:661px;top:1353px;width:1px;height:27px;background:#999"></div>
<div class="t" style="left:666px;top:1360.20px;font-size:16.3px;font-weight:400;color:#1a1a1a;">Касовий апарат: Samsung ER-350 №123456</div>
<div class="a" style="left:1117px;top:1353px;width:1px;height:27px;background:#999"></div>
<div class="t" style="left:1123px;top:1360.20px;font-size:16.3px;font-weight:400;color:#1a1a1a;">Зона: Склад [1]</div>
<div class="a" style="left:0;top:0;width:2159px;height:1382px;z-index:10">
<div class="a" style="left:313px;top:384px;width:662px;height:760px;background:#fff"></div>
<div class="a" style="left:315px;top:386px;width:660px;height:763px;border:1px solid #3c3c3c;border-right:none;border-top:1.2px solid #3c3c3c"></div>
<div class="a" style="left:974px;top:386px;width:1px;height:39px;background:#3c3c3c"></div>
<div class="a" style="left:973px;top:425px;width:2px;height:723px;background:#a9a9a9"></div>
<div class="a" style="left:316px;top:387px;width:657px;height:38px;background:#fff"></div>
<div class="a" style="left:316px;top:425px;width:537px;height:29px;background:#fff"></div>
<div class="a" style="left:853px;top:425px;width:120px;height:720px;background:#f0f0f0"></div>
<div class="a" style="left:316px;top:454px;width:537px;height:691px;background:#f0f0f0"></div>
<div class="a" style="left:316px;top:1145px;width:659px;height:3px;background:#a4a4a4"></div>
<div class="a" style="left:315px;top:1148px;width:660px;height:1.2px;background:#3c3c3c"></div>
<div class="t" style="left:321.5px;top:398.49px;font-size:17.5px;font-weight:400;color:#000;">Користувачі (ідентифікатор: 870)</div>
<svg style="left:941.5px;top:397.5px" width="16" height="16"><path d="M0.5 0.5L15.5 15.5M15.5 0.5L0.5 15.5" stroke="#111" stroke-width="1.3"/></svg>
<div class="a" style="left:316px;top:453px;width:7px;height:2px;background:#222"></div>
<div class="a" style="left:402px;top:453px;width:451px;height:2px;background:#222"></div>
<div class="a" style="left:322px;top:425px;width:81px;height:30px;border:2px solid #222;border-bottom:none;background:#f0f0f0"></div>
<div class="a" style="left:325.5px;top:428.5px;width:74px;height:23px;border:1px dotted #333"></div>
<div class="t" style="left:329px;top:434.12px;font-size:16.4px;font-weight:400;color:#111;">Загальні</div>
<div class="t" style="left:408.7px;top:434.75px;font-size:16.6px;font-weight:400;color:#111;">Зони доступу</div>
<div class="a" style="left:861px;top:438.5px;width:106px;height:34.5px;border:2px solid #0078d7;background:#e1e1e1"></div>
<div class="t" style="left:883.5px;width:60px;text-align:center;top:447.44px;font-size:17.2px;font-weight:400;color:#000;">Так</div>
<div class="a" style="left:861px;top:487px;width:106px;height:34px;border:1px solid #adadad;background:#e1e1e1"></div>
<div class="t" style="left:863.5px;width:100px;text-align:center;top:495.61px;font-size:17px;font-weight:400;color:#000;">Скасувати</div>
<div class="a" style="left:319.3px;top:467.8px;width:521.5px;height:250.5px;border:1px solid #dcdcdc;box-shadow:inset 1px 1px 0 #fff"></div>
<div class="t" style="left:335.3px;top:479.90px;font-size:16.3px;font-weight:400;color:#111;">ПІБ:</div>
<svg style="left:376px;top:480px" width="10" height="9"><path d="M4.5 0.5v8M0.8 2.5l7.4 4M0.8 6.5l7.4-4" stroke="#f28080" stroke-width="1.3"/></svg>
<div class="a" style="left:335.8px;top:498.8px;width:493px;height:30.8px;border:1.3px solid #7a7a7a;background:#fff"></div>
<div class="a" style="left:804px;top:502px;width:22px;height:24.5px;border:1px solid #b0b0b0;background:#e8e8e8"></div>
<div class="t" style="left:808.5px;top:506.15px;font-size:14px;font-weight:400;color:#222;">···</div>
<div class="t" style="left:340px;top:505.76px;font-size:16px;font-weight:400;color:#111;">Зенич Ірина Володимирівна</div>
<div class="t" style="left:335.3px;top:536.90px;font-size:16.3px;font-weight:400;color:#111;">Системне ім'я користувача:</div>
<svg style="left:565px;top:536px" width="10" height="9"><path d="M4.5 0.5v8M0.8 2.5l7.4 4M0.8 6.5l7.4-4" stroke="#f28080" stroke-width="1.3"/></svg>
<div class="a" style="left:335.8px;top:555.8px;width:493px;height:30.8px;border:1.3px solid #7a7a7a;background:#fff"></div>
<div class="a" style="left:695.8px;top:559px;width:130px;height:25px;border:1px solid #a8a8a8;background:#e3e3e3"></div>
<div class="t" style="left:701px;top:564.76px;font-size:16px;font-weight:400;color:#111;">Змінити пароль</div>
<div class="t" style="left:340px;top:562.46px;font-size:16px;font-weight:400;color:#111;">U200</div>
<div class="t" style="left:335.3px;top:595.90px;font-size:16.3px;font-weight:400;color:#111;">Код користувача:</div>
<div class="a" style="left:335.8px;top:614.3px;width:492px;height:31.1px;border:1.3px solid #7a7a7a;background:#fff"></div>
<div class="t" style="left:335.3px;top:654.80px;font-size:16.3px;font-weight:400;color:#111;">E-mail:</div>
<div class="a" style="left:335.8px;top:671.7px;width:493px;height:30.3px;border:1.3px solid #7a7a7a;background:#f0f0f0"></div>
<div class="a" style="left:319.5px;top:729.7px;width:521.3px;height:76.5px;border:1px solid #dcdcdc;box-shadow:inset 1px 1px 0 #fff"></div>
<div class="t" style="left:335.3px;top:740.20px;font-size:16.3px;font-weight:400;color:#111;">Рівні доступу:</div>
<div class="a" style="left:336px;top:758.3px;width:493px;height:30.4px;border:1.3px solid #7a7a7a;background:#fff"></div>
<div class="t" style="left:339px;top:764.01px;font-size:17px;font-weight:400;color:#111;">Заведующий аптекой</div>
<svg style="left:808px;top:768px" width="16" height="12"><path d="M1.5 2.5L7.5 8.5L13.5 2.5" fill="none" stroke="#333" stroke-width="1.4"/></svg>
<div class="a" style="left:324.6px;top:821.5px;width:19.4px;height:19px;border:1.4px solid #333;background:#fff"></div>
<svg style="left:326px;top:822.5px" width="17" height="17"><path d="M2.5 8.5L6.5 12.5L14.5 3.5" fill="none" stroke="#222" stroke-width="1.4"/></svg>
<div class="t" style="left:348.3px;top:824.36px;font-size:16.7px;font-weight:400;color:#111;">Має право знижувати статус документа</div>
<div class="a" style="left:324.6px;top:846.8px;width:19.4px;height:19px;border:1.4px solid #333;background:#fff"></div>
<div class="t" style="left:348.3px;top:849.66px;font-size:16.7px;font-weight:400;color:#111;">Дозволити змінювати ключовий клас</div>
<div class="a" style="left:324.6px;top:872px;width:19.4px;height:19px;border:1.4px solid #333;background:#fff"></div>
<div class="t" style="left:348.3px;top:874.86px;font-size:16.7px;font-weight:400;color:#111;">Бачити лише свої документи</div>
<div class="a" style="left:324.6px;top:896.5px;width:19.4px;height:19px;border:1.4px solid #333;background:#fff"></div>
<div class="t" style="left:348.3px;top:899.36px;font-size:16.7px;font-weight:400;color:#111;">Дозволено перевищення ЦРН</div>
<div class="a" style="left:324.6px;top:989px;width:19.4px;height:19px;border:1.4px solid #333;background:#fff"></div>
<div class="t" style="left:348.3px;top:991.86px;font-size:16.7px;font-weight:400;color:#111;"><span style="display:inline-block;width:153.5px;overflow:hidden;vertical-align:top">Не використовувати</span></div>
<div class="t" style="left:323px;top:1024.60px;font-size:16.3px;font-weight:400;color:#111;">Примітка:</div>
<div class="a" style="left:323.6px;top:1042px;width:643.6px;height:30.5px;border:1.3px solid #7a7a7a;background:#fff"></div>
<div class="a" style="left:323.6px;top:1082.5px;width:643.6px;height:55.8px;border:1px solid #dcdcdc;box-shadow:inset 1px 1px 0 #fff"></div>
<div class="a" style="left:333px;top:1078px;width:127px;height:12px;background:#f0f0f0"></div>
<div class="t" style="left:335.3px;top:1075.89px;font-size:16.2px;font-weight:400;color:#111;">Запис створено:</div>
<div class="t" style="left:335.3px;top:1104.20px;font-size:16.3px;font-weight:400;color:#111;">Автор:</div>
<div class="a" style="left:391px;top:1097px;width:164.8px;height:30.9px;border:1.3px solid #7a7a7a;background:#fff"></div>
<div class="t" style="left:566px;top:1104.20px;font-size:16.3px;font-weight:400;color:#111;">Дата:</div>
<div class="a" style="left:616.4px;top:1097px;width:188.6px;height:30.9px;border:1px solid #dadada;background:#fff"></div>
<div class="t" style="left:621.3px;top:1103.78px;font-size:16.8px;font-weight:400;color:#111;">13.04.2020 05:33:21</div>
</div>
</body></html>
